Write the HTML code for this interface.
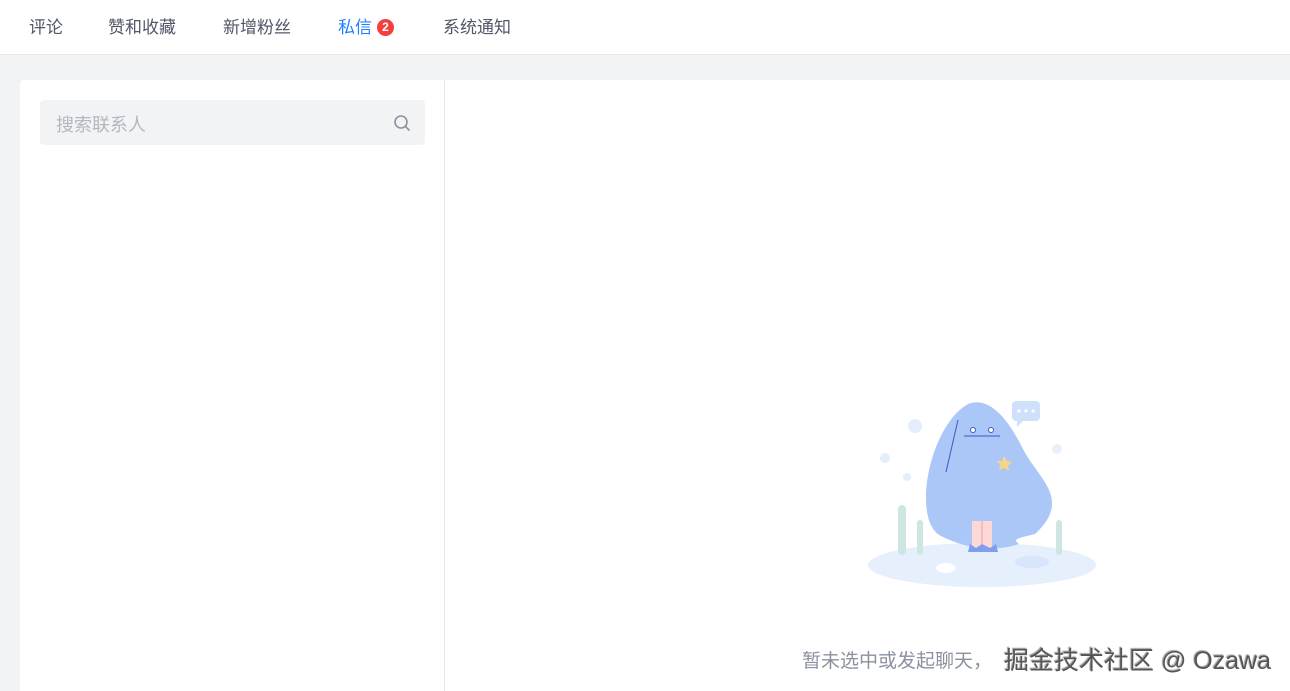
<!DOCTYPE html>
<html><head><meta charset="utf-8"><style>
*{margin:0;padding:0;box-sizing:border-box}
body{width:1290px;height:691px;background:#f2f3f5;font-family:"Liberation Sans","Noto Sans CJK SC",sans-serif;overflow:hidden;position:relative}
.nav{position:absolute;left:0;top:0;width:1290px;height:55px;background:#fff;border-bottom:1px solid #e8e8e8}
.nav span{position:absolute;top:16px;font-size:17px;color:#515767;line-height:24px}
.badge{display:inline-block;width:17px;height:17px;border-radius:9px;background:#f53f3f;color:#fff;font-size:12px;font-weight:bold;line-height:17px;text-align:center;vertical-align:2px;margin-left:5px}
.panel{position:absolute;left:20px;top:80px;width:1270px;height:611px;background:#fff;border-radius:4px 0 0 0}
.div{position:absolute;left:444px;top:80px;width:1px;height:611px;background:#e4e6eb}
.search{position:absolute;left:40px;top:100px;width:385px;height:45px;background:#f2f3f5;border-radius:4px}
.search span{position:absolute;left:16px;top:11px;font-size:18px;color:#b3b7bf}
.txt{position:absolute;left:802px;top:646px;font-size:19px;color:#8a919f;white-space:nowrap}
.wm{position:absolute;left:1004px;top:641px;color:#555;text-shadow:1px 1px 1px #fff,-1px -1px 1px #999;font-size:25px;white-space:nowrap}
</style></head><body>
<div class="nav">
<span style="left:29px">评论</span>
<span style="left:108px">赞和收藏</span>
<span style="left:223px">新增粉丝</span>
<span style="left:338px;color:#1e80ff">私信<i class="badge" style="font-style:normal">2</i></span>
<span style="left:443px">系统通知</span>
</div>
<div class="panel"></div>
<div class="div"></div>
<div class="search"><span>搜索联系人</span>
<svg style="position:absolute;left:353px;top:14px" width="18" height="18" viewBox="0 0 18 18"><circle cx="8" cy="8" r="6" fill="none" stroke="#8a919f" stroke-width="1.6"/><path d="M12.5 12.5L16 16" stroke="#8a919f" stroke-width="1.6" stroke-linecap="round"/></svg></div>
<svg style="position:absolute;left:850px;top:390px" width="260" height="210" viewBox="0 0 260 210">
<ellipse cx="132" cy="175" rx="114" ry="22" fill="#e6effc"/>
<ellipse cx="182" cy="172" rx="17" ry="6" fill="#d8e5fa"/>
<circle cx="65" cy="36" r="7" fill="#e4eefb"/><circle cx="35" cy="68" r="5" fill="#e4eefb"/><circle cx="57" cy="87" r="4" fill="#e4eefb"/><circle cx="207" cy="59" r="5" fill="#e8f1fb"/>
<rect x="162" y="11" width="28" height="20" rx="4" fill="#cfe0fb"/><path d="M167 31l0 6 6-6z" fill="#cfe0fb"/>
<circle cx="169" cy="21" r="1.6" fill="#fff"/><circle cx="176" cy="21" r="1.6" fill="#fff"/><circle cx="183" cy="21" r="1.6" fill="#fff"/>
<path d="M118 14c25-10 45 25 55 45 15 30 50 50 12 85-20 5-22 5-16 10-30 10-58 2-78-8-30-15-12-110 27-132z" fill="#abc7f7"/>
<path d="M108 30l-12 52" stroke="#3a5ac0" stroke-width="1" fill="none"/>
<path d="M114 46h36" stroke="#3a5ac0" stroke-width="1"/>
<circle cx="123" cy="40" r="2.5" fill="#fff" stroke="#3a5ac0"/><circle cx="141" cy="40" r="2.5" fill="#fff" stroke="#3a5ac0"/>
<path d="M154 66l3 5 5 1-4 4 1 5-5-3-5 2 1-5-3-4 5 0z" fill="#f5d58c"/>
<rect x="122" y="131" width="20" height="28" fill="#fcd9d6"/><path d="M132 131v28" stroke="#e08080" stroke-width="0.6"/>
<path d="M118 162h30l-2-8-6 4-8-4-6 4-6-4z" fill="#7f9ef0"/>
<rect x="48" y="115" width="8" height="50" rx="4" fill="#cde6e2"/><rect x="67" y="130" width="6" height="35" rx="3" fill="#cde6e2"/><rect x="206" y="130" width="6" height="35" rx="3" fill="#cde6e2"/>
<ellipse cx="96" cy="178" rx="10" ry="5" fill="#fff"/>
</svg>
<div class="txt">暂未选中或发起聊天，</div>
<div class="wm">掘金技术社区 @ Ozawa</div>
</body></html>
